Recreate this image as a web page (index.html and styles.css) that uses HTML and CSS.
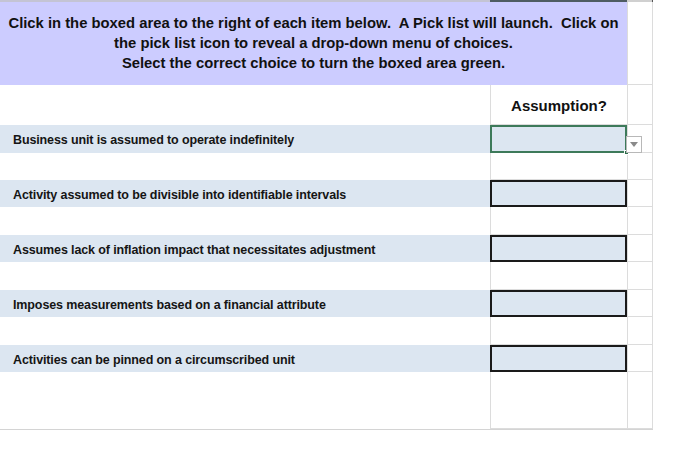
FILE: index.html
```html
<!DOCTYPE html>
<html>
<head>
<meta charset="utf-8">
<link rel="stylesheet" href="styles.css">
</head>
<body>
<div class="sheet">
  <div class="topline">
    <div class="seg-a"></div>
    <div class="seg-b"></div>
    <div class="seg-c"></div>
  </div>
  <div class="top">
    <div class="banner">
      <p>Click in the boxed area to the right of each item below.&nbsp; A Pick list will launch.&nbsp; Click on<br>the pick list icon to reveal a drop-down menu of choices.<br>Select the correct choice to turn the boxed area green.</p>
    </div>
    <div class="side side-top"></div>
  </div>
  <div class="row head">
    <div class="label"></div>
    <div class="box-col">Assumption?</div>
    <div class="side"></div>
  </div>
  <div class="row blue h28">
    <div class="label">Business unit is assumed to operate indefinitely</div>
    <div class="box-col boxed selected"><span class="handle"></span><span class="dropdown"><svg width="8" height="5" viewBox="0 0 8 5"><polygon points="0,0 8,0 4,5" fill="#8a8a8a"/></svg></span></div>
    <div class="side"></div>
  </div>
  <div class="row h27">
    <div class="label"></div>
    <div class="box-col"></div>
    <div class="side"></div>
  </div>
  <div class="row blue h27">
    <div class="label">Activity assumed to be divisible into identifiable intervals</div>
    <div class="box-col boxed"></div>
    <div class="side"></div>
  </div>
  <div class="row h28">
    <div class="label"></div>
    <div class="box-col"></div>
    <div class="side"></div>
  </div>
  <div class="row blue h27">
    <div class="label">Assumes lack of inflation impact that necessitates adjustment</div>
    <div class="box-col boxed"></div>
    <div class="side"></div>
  </div>
  <div class="row h28">
    <div class="label"></div>
    <div class="box-col"></div>
    <div class="side"></div>
  </div>
  <div class="row blue h27">
    <div class="label">Imposes measurements based on a financial attribute</div>
    <div class="box-col boxed"></div>
    <div class="side"></div>
  </div>
  <div class="row h28">
    <div class="label"></div>
    <div class="box-col"></div>
    <div class="side"></div>
  </div>
  <div class="row blue h27">
    <div class="label">Activities can be pinned on a circumscribed unit</div>
    <div class="box-col boxed"></div>
    <div class="side"></div>
  </div>
  <div class="row last">
    <div class="label"></div>
    <div class="box-col"></div>
    <div class="side"></div>
  </div>
</div>
</body>
</html>
```
FILE: styles.css
```css
* { box-sizing: border-box; }
html, body { margin: 0; padding: 0; background: #ffffff; }
body { font-family: "Liberation Sans", Arial, Helvetica, sans-serif; color: #111111; }

.sheet {
  width: 653px;
}

.topline {
  display: grid;
  grid-template-columns: 490px 137px 26px;
  height: 2px;
}
.seg-a { background: #c4c4d4; }
.seg-b { background: #4e5c62; }
.seg-c { background: #d0d0d0; border-right: 1px solid #555555; }

.top {
  display: grid;
  grid-template-columns: 627px 26px;
  height: 83px;
}
.banner {
  background: #ccccff;
  display: flex;
  align-items: center;
  justify-content: center;
}
.banner p {
  margin: 0;
  text-align: center;
  font-weight: bold;
  font-size: 14.8px;
  line-height: 20px;
  padding-bottom: 2px;
  color: #111111;
}
.side-top {
  border-right: 1px solid #dcdcdc;
  border-bottom: 1px solid #dcdcdc;
}

.row {
  display: grid;
  grid-template-columns: 490px 137px 26px;
}
.row.head { height: 40px; }
.row.h27 { height: 27px; }
.row.h28 { height: 28px; }
.row.last { height: 58px; border-bottom: 1px solid #d4d4d4; }

.label {
  display: flex;
  align-items: center;
  padding-left: 13px;
  padding-top: 2px;
  font-weight: bold;
  font-size: 12.5px;
  letter-spacing: -0.12px;
  color: #151515;
}
.blue .label, .blue .box-col { background: #dce6f1; }

.box-col {
  position: relative;
  border-left: 1px solid #dcdcdc;
  border-bottom: 1px solid #dcdcdc;
  display: flex;
  align-items: center;
  justify-content: center;
}
.side {
  border-left: 1px solid #dcdcdc;
  border-right: 1px solid #dcdcdc;
  border-bottom: 1px solid #dcdcdc;
}
.head .box-col {
  font-weight: bold;
  font-size: 15px;
  padding-top: 2px;
}

.boxed { border: 2px solid #1a1a1a; }
.boxed.selected { border: 2px solid #3d7a5a; }

.handle {
  position: absolute;
  right: -4px;
  bottom: -4px;
  width: 5px;
  height: 5px;
  background: #2f6e4c;
  border: 1px solid #ffffff;
}
.dropdown {
  position: absolute;
  left: 134px;
  top: 9px;
  width: 16px;
  height: 17px;
  background: #ffffff;
  border: 1px solid #b8b8b8;
  display: flex;
  align-items: center;
  justify-content: center;
}
```
